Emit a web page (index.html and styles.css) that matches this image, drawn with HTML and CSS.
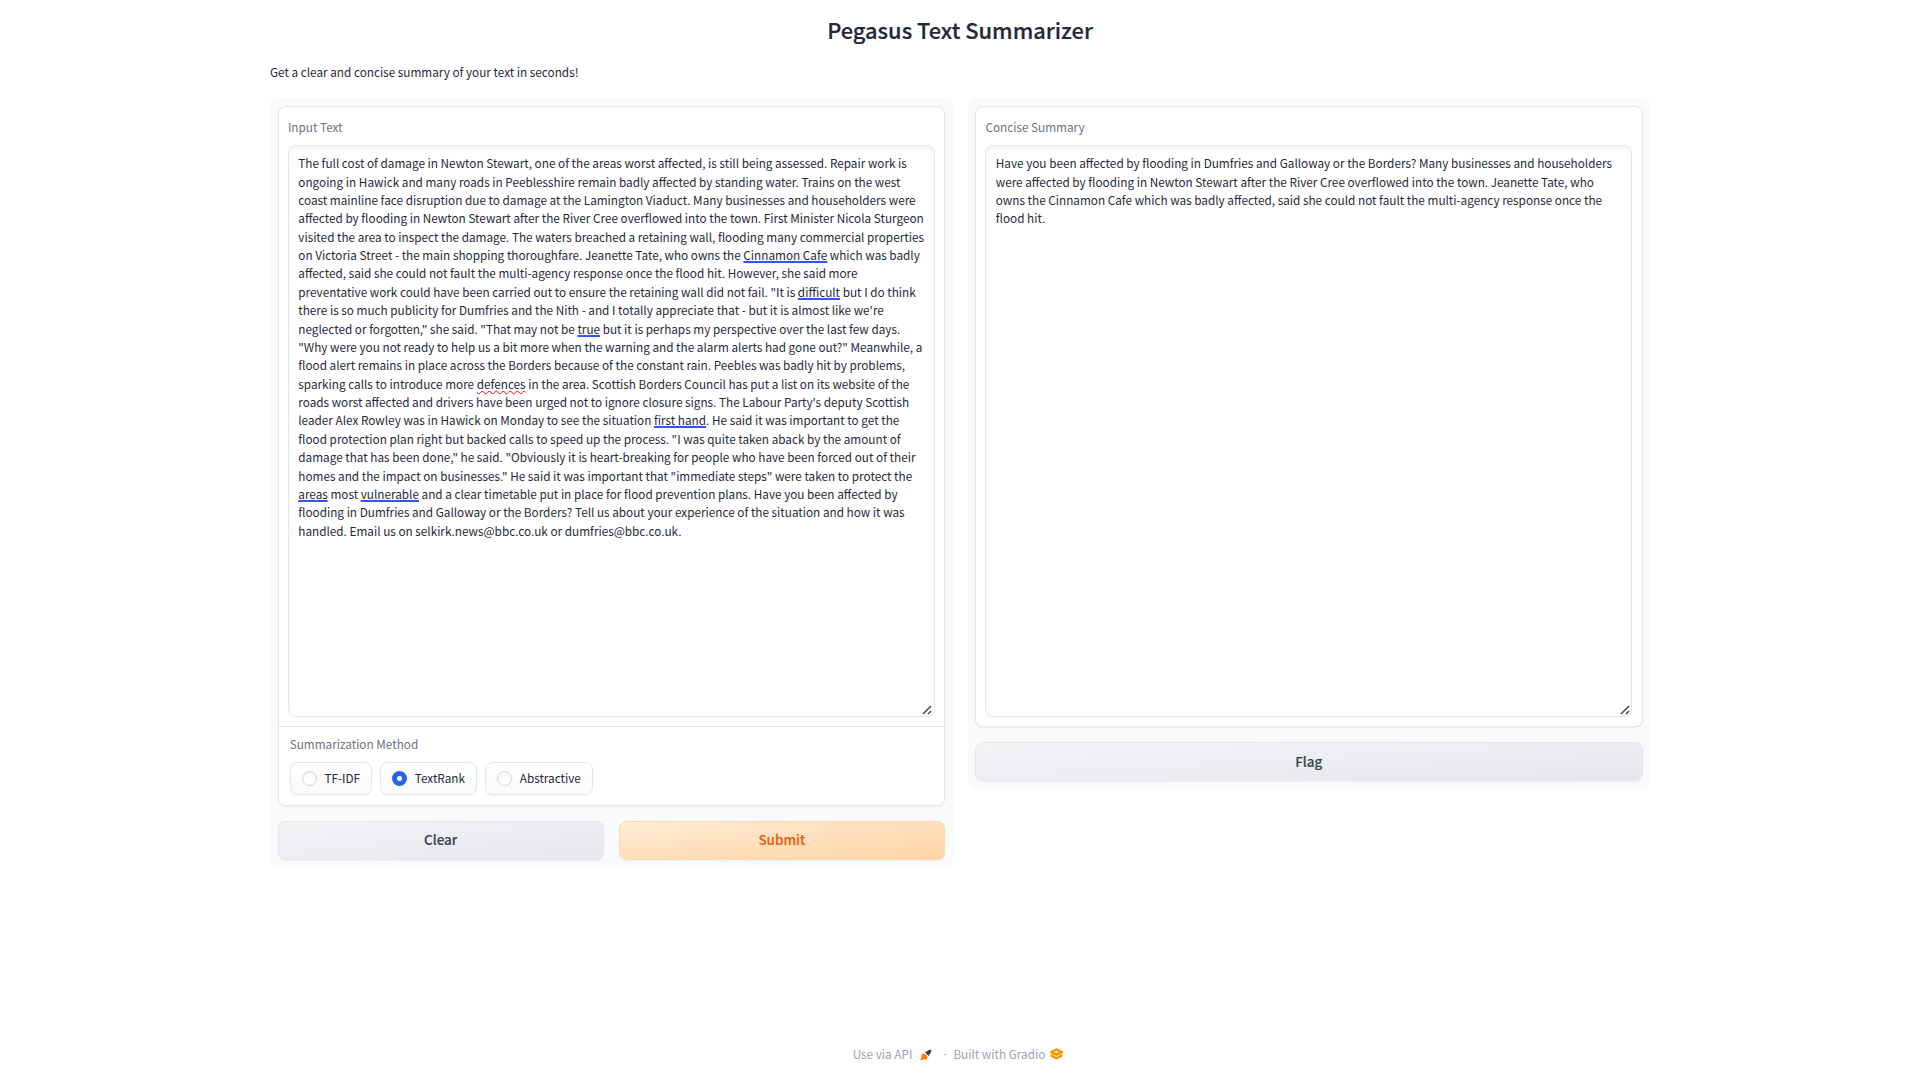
FILE: index.html
```
<!DOCTYPE html>
<html lang="en">
<head>
<meta charset="utf-8">
<title>Pegasus Text Summarizer</title>
<link rel="stylesheet" href="styles.css">
</head>
<body>
<main class="app">
  <h1 class="title">Pegasus Text Summarizer</h1>
  <p class="description">Get a clear and concise summary of your text in seconds!</p>
  <div class="columns">
    <section class="panel">
      <div class="block">
        <div class="field">
          <div class="label">Input Text</div>
          <div class="textbox">The full cost of damage in Newton Stewart, one of the areas worst affected, is still being assessed. Repair work is<br>
ongoing in Hawick and many roads in Peeblesshire remain badly affected by standing water. Trains on the west<br>
coast mainline face disruption due to damage at the Lamington Viaduct. Many businesses and householders were<br>
affected by flooding in Newton Stewart after the River Cree overflowed into the town. First Minister Nicola Sturgeon<br>
visited the area to inspect the damage. The waters breached a retaining wall, flooding many commercial properties<br>
on Victoria Street - the main shopping thoroughfare. Jeanette Tate, who owns the <span class="hint">Cinnamon Cafe</span> which was badly<br>
affected, said she could not fault the multi-agency response once the flood hit. However, she said more<br>
preventative work could have been carried out to ensure the retaining wall did not fail. "It is <span class="hint">difficult</span> but I do think<br>
there is so much publicity for Dumfries and the Nith - and I totally appreciate that - but it is almost like we're<br>
neglected or forgotten," she said. "That may not be <span class="hint">true</span> but it is perhaps my perspective over the last few days.<br>
"Why were you not ready to help us a bit more when the warning and the alarm alerts had gone out?" Meanwhile, a<br>
flood alert remains in place across the Borders because of the constant rain. Peebles was badly hit by problems,<br>
sparking calls to introduce more <span class="misspelled">defences</span> in the area. Scottish Borders Council has put a list on its website of the<br>
roads worst affected and drivers have been urged not to ignore closure signs. The Labour Party's deputy Scottish<br>
leader Alex Rowley was in Hawick on Monday to see the situation <span class="hint">first hand</span>. He said it was important to get the<br>
flood protection plan right but backed calls to speed up the process. "I was quite taken aback by the amount of<br>
damage that has been done," he said. "Obviously it is heart-breaking for people who have been forced out of their<br>
homes and the impact on businesses." He said it was important that "immediate steps" were taken to protect the<br>
<span class="hint">areas</span> most <span class="hint">vulnerable</span> and a clear timetable put in place for flood prevention plans. Have you been affected by<br>
flooding in Dumfries and Galloway or the Borders? Tell us about your experience of the situation and how it was<br>
handled. Email us on selkirk.news@bbc.co.uk or dumfries@bbc.co.uk.<svg class="grip" viewBox="0 0 10 10"><path d="M1 9 9 1M6 9 9 6"/></svg></div>
        </div>
        <div class="method">
          <div class="label">Summarization Method</div>
          <div class="options">
            <div class="option"><span class="radio"></span>TF-IDF</div>
            <div class="option"><span class="radio checked"></span>TextRank</div>
            <div class="option"><span class="radio"></span>Abstractive</div>
          </div>
        </div>
      </div>
      <div class="buttons">
        <button class="button raised">Clear</button>
        <button class="button raised primary">Submit</button>
      </div>
    </section>
    <section class="panel">
      <div class="block">
        <div class="field">
          <div class="label">Concise Summary</div>
          <div class="textbox">Have you been affected by flooding in Dumfries and Galloway or the Borders? Many businesses and householders<br>
were affected by flooding in Newton Stewart after the River Cree overflowed into the town. Jeanette Tate, who<br>
owns the Cinnamon Cafe which was badly affected, said she could not fault the multi-agency response once the<br>
flood hit.<svg class="grip" viewBox="0 0 10 10"><path d="M1 9 9 1M6 9 9 6"/></svg></div>
        </div>
      </div>
      <div class="buttons">
        <button class="button">Flag</button>
      </div>
    </section>
  </div>
</main>
<footer class="footer">
  <span>Use via API</span>
  <svg class="rocket" viewBox="0 0 12 12">
    <path fill="#374151" d="M11.4.7 8.6 1 6.2 3 6 4.6 7.4 6 9 5.8 11 3.4zM4.9 3 7 2.3 5.6 4.1zM9 7.1 9.7 5 7.9 6.4z"/>
    <path fill="#ff7c00" d="M4.8 4.6 2.2 4.9 1 7.2 2 7.5 1.2 9 .4 11.6 3 10.8 4.4 10 4.9 11 7.1 9.8 7.4 7.2 6 6z"/>
  </svg>
  <span class="dot">·</span>
  <span>Built with Gradio</span>
  <svg class="logo" viewBox="0 0 13 12">
    <path fill="#ffb000" d="M6.5.4 12.8 3.6V8.2L6.5 11.6.2 8.2V3.6z"/>
    <path fill="none" stroke="#ff8a00" stroke-width="1.5" stroke-linejoin="round" d="M6.5 1.2 12 3.9 6.5 6.7 1 3.9zM12 7.9 6.5 10.7 1 7.9"/>
    <path fill="#fff3d6" d="M6.5 2.7 9 4 6.5 5.2 4 4zM3.5 7.4 6.5 9 9.5 7.4 8.5 6.9 6.5 8 4.5 6.9zM.2 5.2 2 6.2.2 7.2zM12.8 5.2 11 6.2 12.8 7.2z"/>
  </svg>
</footer>
</body>
</html>
```
FILE: styles.css
```
* { box-sizing: border-box; }

body {
  margin: 0;
  min-height: 1080px;
  display: flex;
  flex-direction: column;
  align-items: center;
  background: #fff;
  color: #1f2937;
  font: 400 11.75px/18.375px "Noto Sans CJK SC", "Source Sans Pro", sans-serif;
}

.app { width: 1380px; flex: 1; }

.title {
  margin: 14px 0 0;
  font-size: 21.85px;
  font-weight: 500;
  line-height: 32px;
  text-align: center;
  -webkit-text-stroke: 0.2px currentColor;
}

.description { margin: 16px 0 17px; line-height: 19px; }

.columns { display: flex; gap: 15px; align-items: flex-start; }

.panel {
  flex: 1;
  display: flex;
  flex-direction: column;
  gap: 15px;
  padding: 7.5px;
  border-radius: 7.5px;
  background: #f9fafb;
}

.block {
  border: 1px solid #e5e7eb;
  border-radius: 7.5px;
  background: #fff;
  box-shadow: 0 1px 2px rgba(0, 0, 0, 0.05);
}

.field { padding: 10.2px 9.4px 8.6px; }

.label { color: #6b7280; line-height: 20.6px; }

.field .label { margin-bottom: 7.8px; }

.textbox {
  position: relative;
  height: 572px;
  padding: 8.1px 9.4px;
  border: 1px solid #e5e7eb;
  border-radius: 7.5px;
  box-shadow: inset 0 2px 4px rgba(0, 0, 0, 0.05);
  white-space: nowrap;
}

.grip {
  position: absolute;
  right: 1.5px;
  bottom: 1px;
  width: 10px;
  height: 10px;
  fill: none;
  stroke: #454545;
  stroke-width: 1.5;
}

.hint {
  text-decoration: underline 2px #3355ff;
  text-decoration-skip-ink: none;
  text-underline-offset: 1px;
}

.misspelled {
  text-decoration: underline wavy 1px #f00;
  text-decoration-skip-ink: none;
  text-underline-offset: 1px;
}

.method {
  height: 79px;
  padding: 7.5px 11.2px;
  border-top: 1px solid #e5e7eb;
}

.options { display: flex; gap: 8.3px; margin-top: 7.3px; }

.option {
  display: flex;
  align-items: center;
  gap: 7.7px;
  height: 33px;
  padding: 0 11.2px 0 11px;
  border: 1px solid #e5e7eb;
  border-radius: 7.5px;
  background: linear-gradient(#fff, #f9fafb);
  box-shadow: 0 1px 2px rgba(0, 0, 0, 0.05);
}

.option + .option { padding-left: 10.6px; }

.radio {
  width: 15px;
  height: 15px;
  border: 1px solid #d1d5db;
  border-radius: 50%;
  background: #fff;
  box-shadow: inset 0 2px 4px rgba(0, 0, 0, 0.05);
}

.radio.checked { border: 5px solid #2563eb; box-shadow: none; }

.buttons { display: flex; gap: 15px; }

.button {
  flex: 1;
  height: 39.4px;
  padding: 0 0 0.8px;
  border: 1px solid #e5e7eb;
  border-radius: 7.5px;
  background: linear-gradient(to bottom right, #f3f4f6, #e5e7eb);
  box-shadow: 0 1px 2px rgba(0, 0, 0, 0.05);
  color: #374151;
  font: 500 13.45px/20px "Noto Sans CJK SC", sans-serif;
  -webkit-text-stroke: 0.15px currentColor;
}

.button.raised { padding-bottom: 2px; }

.button.primary {
  border-color: #fed7aa;
  background: linear-gradient(to bottom right, #ffedd5, #fdd3a4);
  color: #ea580c;
}

.footer {
  display: flex;
  align-items: center;
  height: 20px;
  margin: 0 4.5px 16px 0;
  color: #9ca3af;
}

.rocket { width: 12px; height: 12px; margin: 1px 10.5px 0 8px; }

.dot { width: 3px; margin-right: 7.5px; font-family: "Liberation Sans", sans-serif; }

.logo { width: 13px; height: 12px; margin: 0 0 0 4.5px; }
```
